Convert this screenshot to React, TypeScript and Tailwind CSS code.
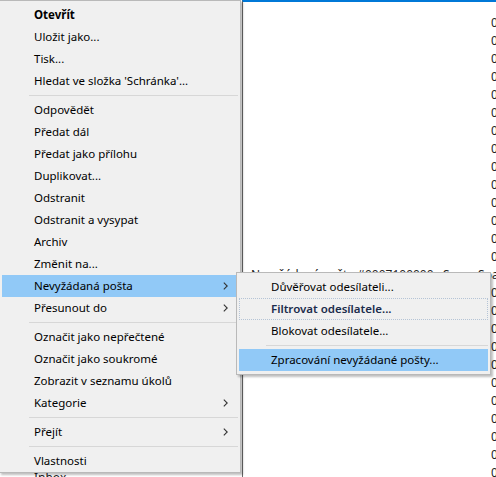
import React from 'react'

// ── Menu data ────────────────────────────────────────────────────────────────
type Entry =
  | { sep: true }
  | { label: string; bold?: boolean; sub?: boolean; active?: boolean }

const mainItems: Entry[] = [
  { label: 'Otevřít', bold: true },
  { label: 'Uložit jako...' },
  { label: 'Tisk...' },
  { label: "Hledat ve složka 'Schránka'..." },
  { sep: true },
  { label: 'Odpovědět' },
  { label: 'Předat dál' },
  { label: 'Předat jako přílohu' },
  { label: 'Duplikovat...' },
  { label: 'Odstranit' },
  { label: 'Odstranit a vysypat' },
  { label: 'Archiv' },
  { label: 'Změnit na...' },
  { label: 'Nevyžádaná pošta', sub: true, active: true },
  { label: 'Přesunout do', sub: true },
  { sep: true },
  { label: 'Označit jako nepřečtené' },
  { label: 'Označit jako soukromé' },
  { label: 'Zobrazit v seznamu úkolů' },
  { label: 'Kategorie', sub: true },
  { sep: true },
  { label: 'Přejít', sub: true },
  { sep: true },
  { label: 'Vlastnosti' },
]

const font = { fontFamily: '"Noto Sans", "Open Sans", sans-serif' }

function Chevron() {
  return (
    <svg width="5" height="8" viewBox="0 0 5 8" className="shrink-0">
      <path d="M0.8 0.6 L4.2 4 L0.8 7.4" fill="none" stroke="#333" strokeWidth="1.1" />
    </svg>
  )
}

function Separator() {
  return (
    <div className="h-[7px] flex items-center pl-[29px] pr-[2px]">
      <div className="h-px w-full bg-[#d7d7d7]" />
    </div>
  )
}

function MenuRow({ e }: { e: Entry }) {
  if ('sep' in e) return <Separator />
  return (
    <div
      className={[
        'h-[22px] mx-[2px] flex items-center pl-[32px] pr-[10px] text-[11.5px] text-black',
        e.active ? 'bg-[#91c9f7]' : '',
        e.bold ? 'font-bold' : '',
      ].join(' ')}
    >
      <span className="flex-1 whitespace-nowrap">{e.label}</span>
      {e.sub && <Chevron />}
    </div>
  )
}

// ── App ──────────────────────────────────────────────────────────────────────
export default function App() {
  return (
    <div className="relative w-[496px] h-[477px] overflow-hidden bg-white" style={font}>
      {/* Window behind the menus */}
      <div className="flex h-full">
        <div className="w-[242px] flex flex-col justify-end">
          <div className="h-[5px] overflow-hidden">
            <div className="pl-[34px] text-[12px] leading-[12px] text-[#222] whitespace-nowrap">Inbox</div>
          </div>
        </div>
        <div className="flex-1 border-t-2 border-[#0078d7] border-l border-l-[#6b6b6b] overflow-hidden">
          <div className="flex flex-col pt-[12px]">
            {Array.from({ length: 26 }).map((_, i) => (
              <div key={i} className="h-[18px] flex items-center justify-end overflow-hidden">
                {i === 14 ? (
                  <span className="flex-1 pl-[8px] text-[12px] whitespace-nowrap text-[#222] overflow-hidden">
                    Nevyžádaná pošta #0007100000 &nbsp; Spam Spam 00:10:00
                  </span>
                ) : (
                  <span className="text-[12px] text-[#222] leading-none w-[5px] overflow-hidden whitespace-nowrap">
                    0
                  </span>
                )}
              </div>
            ))}
          </div>
        </div>
      </div>

      {/* Main context menu */}
      <div className="absolute left-[-1px] top-0 w-[242px] h-[473px] bg-[#f0f0f0] border border-[#b9b9b9] shadow-[2px_2px_2px_rgba(0,0,0,0.25)] py-[3px]">
        {mainItems.map((e, i) => (
          <MenuRow key={i} e={e} />
        ))}
      </div>

      {/* Submenu: Nevyžádaná pošta */}
      <div className="absolute left-[236px] top-[272px] w-[255px] bg-[#f0f0f0] border border-[#b9b9b9] shadow-[2px_2px_2px_rgba(0,0,0,0.25)] py-[3px] text-[11.5px] text-black">
        <div className="h-[22px] mx-[2px] flex items-center pl-[32px]">Důvěřovat odesílateli...</div>
        <div className="h-[22px] mx-[2px] flex items-center pl-[31px] border border-dotted border-[#b5c4d6] font-semibold text-[#1b2c4c]">
          Filtrovat odesílatele...
        </div>
        <div className="h-[22px] mx-[2px] flex items-center pl-[32px]">Blokovat odesílatele...</div>
        <Separator />
        <div className="h-[22px] mx-[2px] flex items-center pl-[32px] bg-[#91c9f7]">Zpracování nevyžádané pošty...</div>
      </div>
    </div>
  )
}
